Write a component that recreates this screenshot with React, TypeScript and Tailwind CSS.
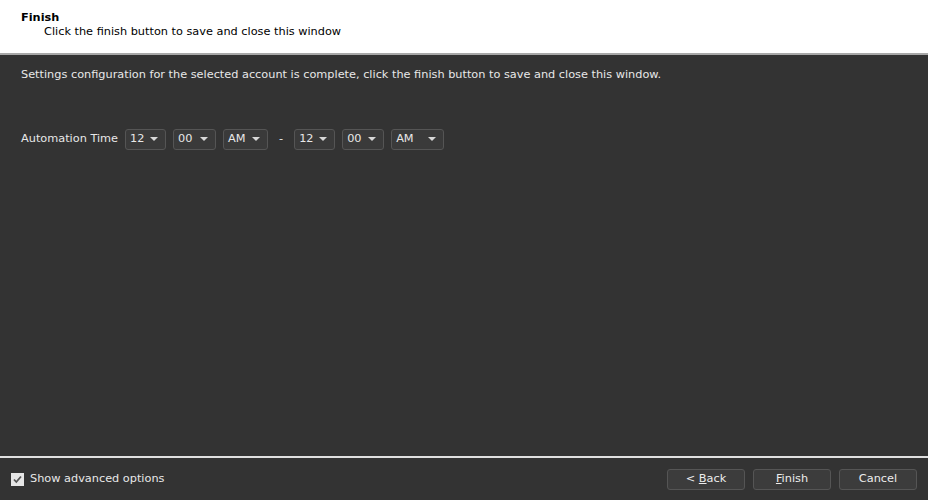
import { useState } from 'react';

const font = { fontFamily: '"DejaVu Sans", Verdana, sans-serif' };

function Caret() {
  return (
    <svg width="8" height="4" viewBox="0 0 8 4" className="shrink-0">
      <path d="M0 0h8L4 4z" fill="#d8d8d8" />
    </svg>
  );
}

function Select({ value, width }: { value: string; width: string }) {
  return (
    <div
      className={`flex h-[21px] items-center justify-between rounded-[3px] border border-[#555] bg-[#3a3a3a] pl-[4px] pr-[7px] text-[#e8e8e8] ${width}`}
    >
      <span>{value}</span>
      <Caret />
    </div>
  );
}

function Button({ children }: { children: React.ReactNode }) {
  return (
    <button className="h-[21px] w-[78px] rounded-[3px] border border-[#555] bg-[#3c3c3c] text-[#ececec]">
      {children}
    </button>
  );
}

export default function App() {
  const [advanced, setAdvanced] = useState(true);

  return (
    <div className="flex h-[500px] w-[928px] flex-col text-[11.3px]" style={font}>
      <div className="h-[55px] border-b-2 border-[#a8a8a8] bg-white px-[21px] pt-[11px] leading-[14px] text-black">
        <div className="font-bold">Finish</div>
        <div className="pl-[23px]">Click the finish button to save and close this window</div>
      </div>

      <div className="flex flex-1 flex-col bg-[#333333] px-[21px] pt-[12px] text-[#e8e8e8]">
        <p>Settings configuration for the selected account is complete, click the finish button to save and close this window.</p>

        <div className="mt-[45px] flex items-center gap-[7px]">
          <span>Automation Time</span>
          <Select value="12" width="w-[41px]" />
          <Select value="00" width="w-[43px]" />
          <Select value="AM" width="w-[45px]" />
          <span className="px-[4px]">-</span>
          <Select value="12" width="w-[41px]" />
          <Select value="00" width="w-[42px]" />
          <Select value="AM" width="w-[53px]" />
        </div>
      </div>

      <div className="flex h-[44px] items-center justify-between border-t-2 border-[#e0e0e0] bg-[#333333] pl-[11px] pr-[11px] text-[#e8e8e8]">
        <label className="flex items-center gap-[6px]">
          <span
            onClick={() => setAdvanced(!advanced)}
            className="flex h-[13px] w-[13px] items-center justify-center bg-[#e6e6e6]"
          >
            {advanced && (
              <svg width="9" height="9" viewBox="0 0 9 9">
                <path d="M1 4.5l2.3 2.5L8 1.5" stroke="#555" strokeWidth="1.8" fill="none" />
              </svg>
            )}
          </span>
          <span>Show advanced options</span>
        </label>
        <div className="flex gap-[8px]">
          <Button>
            &lt; <span className="underline">B</span>ack
          </Button>
          <Button>
            <span className="underline">F</span>inish
          </Button>
          <Button>Cancel</Button>
        </div>
      </div>
    </div>
  );
}
